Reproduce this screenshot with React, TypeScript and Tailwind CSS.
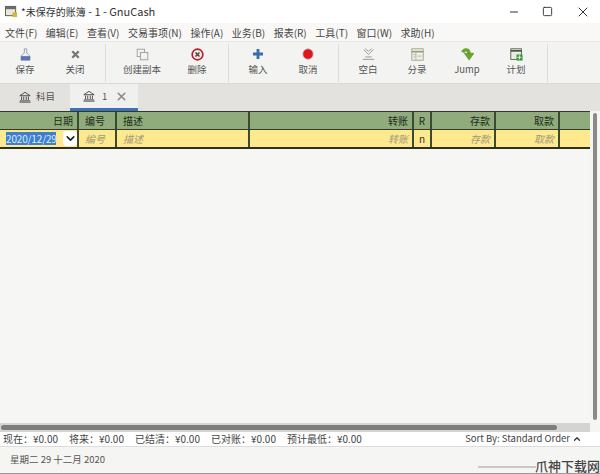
import { ReactNode } from 'react';
import { ChevronDown, ChevronUp, Minus, Square, X } from 'lucide-react';

const font = "font-['Noto_Sans_CJK_SC','Noto_Sans',sans-serif]";

const menus = ['文件(F)', '编辑(E)', '查看(V)', '交易事项(N)', '操作(A)', '业务(B)', '报表(R)', '工具(T)', '窗口(W)', '求助(H)'];

function SaveIcon() {
  return (
    <svg width="13" height="13" viewBox="0 0 16 16">
      <path d="M6.500 1h3v5l4 4v5h-11v-5l4-4z" fill="#eef0f4" stroke="#8791ad" />
      <rect x="2.500" y="10" width="11" height="5" fill="#5d74b2" />
    </svg>
  );
}

function CloseIcon() {
  return (
    <svg width="9" height="9" viewBox="0 0 14 14">
      <path d="M2 2l10 10M12 2L2 12" stroke="#75797c" strokeWidth="3.600" />
    </svg>
  );
}

function CopyIcon() {
  return (
    <svg width="13" height="13" viewBox="0 0 16 16" fill="#f2f2f0" stroke="#a2a29e" strokeWidth="1.200">
      <rect x="1.500" y="1.500" width="9" height="9" />
      <rect x="5.500" y="5.500" width="9" height="9" />
    </svg>
  );
}

function DeleteIcon() {
  return (
    <svg width="13" height="13" viewBox="0 0 16 16">
      <circle cx="8" cy="8" r="6.600" fill="#f4e6e6" stroke="#b3202c" strokeWidth="2" />
      <path d="M5.600 5.600l4.800 4.800M10.400 5.600l-4.800 4.800" stroke="#444" strokeWidth="1.800" />
    </svg>
  );
}

function PlusIcon() {
  return (
    <svg width="10" height="10" viewBox="0 0 14 14">
      <path d="M5 0h4v5h5v4H9v5H5V9H0V5h5z" fill="#3a6ea5" />
    </svg>
  );
}

function RecordIcon() {
  return (
    <svg width="12" height="12" viewBox="0 0 14 14">
      <circle cx="7" cy="7" r="6" fill="#e2141c" stroke="#b9a8a8" />
    </svg>
  );
}

function BlankIcon() {
  return (
    <svg width="13" height="13" viewBox="0 0 16 16" fill="none" stroke="#9a9c92" strokeWidth="1.200">
      <path d="M2 2l6 6 6-6M4 1l4 3 4-3" />
      <path d="M4 11h8M1 14h14" />
    </svg>
  );
}

function SplitIcon() {
  return (
    <svg width="13" height="13" viewBox="0 0 16 16">
      <rect x="1" y="1" width="14" height="14" fill="#f1f0e4" stroke="#8f9c80" />
      <path d="M1 4.500h14" stroke="#8f9c80" strokeWidth="2" />
      <path d="M6 5v10M3 8h2M3 11h2M8 10h5" stroke="#a5ad98" />
    </svg>
  );
}

function JumpIcon() {
  return (
    <svg width="13" height="14" viewBox="0 0 16 16">
      <path d="M2 6C4 1.500 10 1.500 10 8" fill="none" stroke="#68a62c" strokeWidth="4" />
      <path d="M4 7h12l-6 8.500z" fill="#68a62c" stroke="#4a7f1e" strokeWidth="0.600" />
    </svg>
  );
}

function ScheduleIcon() {
  return (
    <svg width="13" height="13" viewBox="0 0 16 16">
      <rect x="1" y="1" width="13" height="13" fill="#e6eee2" stroke="#44503f" />
      <path d="M1 3.500h13" stroke="#44503f" strokeWidth="2" />
      <rect x="8" y="8" width="7.500" height="7.500" fill="#3f9a44" />
      <path d="M11.700 9v5M9 11.500h5" stroke="#fff" />
    </svg>
  );
}

function BankIcon() {
  return (
    <svg width="12" height="12" viewBox="0 0 14 14" fill="none" stroke="#3e3e3e">
      <path d="M1 5.500L7 1.500l6 4z" />
      <path d="M3 6.500v4M5.500 6.500v4M8.500 6.500v4M11 6.500v4" />
      <path d="M1 11.500h12M0.500 13h13" />
    </svg>
  );
}

function ToolButton({ icon, label, width }: { icon: ReactNode; label: string; width: string }) {
  return (
    <div className={`flex ${width} shrink-0 flex-col items-center`}>
      <div className="flex h-[16px] items-center">{icon}</div>
      <span className="text-[9.500px] leading-[14px] text-[#555]">{label}</span>
    </div>
  );
}

function Group({ children, width }: { children: ReactNode; width: string }) {
  return (
    <div className={`flex h-[38px] ${width} shrink-0 items-center border-r border-[#dcdcd8] pb-[3px]`}>
      {children}
    </div>
  );
}

function Cell({ children, width, className = '' }: { children?: ReactNode; width: string; className?: string }) {
  return (
    <div className={`flex ${width} shrink-0 items-center border-r-2 px-1 text-[10px] ${className}`}>
      {children}
    </div>
  );
}

export default function App() {
  const hint = 'justify-end italic text-[#a09a78] border-[#3c4a32]';
  const head = 'text-[#1d2a18] border-[#3c4a32]';
  const totals = [
    ['现在：', '¥0.00'],
    ['将来：', '¥0.00'],
    ['已结清：', '¥0.00'],
    ['已对账：', '¥0.00'],
    ['预计最低：', '¥0.00'],
  ];

  return (
    <div className={`${font} flex h-[474px] w-[600px] flex-col overflow-hidden bg-[#f5f5f3]`}>
      {/* title bar */}
      <div className="flex h-[23px] items-center bg-white pl-[5px]">
        <svg width="13" height="13" viewBox="0 0 14 14">
          <rect x="0.500" y="1.500" width="11" height="10" fill="#ece8dc" stroke="#555" />
          <rect x="0.500" y="1.500" width="11" height="3" fill="#6b6b62" />
          <rect x="8" y="8" width="5" height="5" fill="#d7b43a" />
        </svg>
        <span className="ml-[3px] text-[10px] text-[#333]">
          *未保存的账簿<span className="text-[11px]"> - 1 - GnuCash</span>
        </span>
        <div className="ml-auto mr-[9px] flex items-center gap-[22px] text-[#333]">
          <Minus size={12} />
          <Square size={11} />
          <X size={16} strokeWidth={1.500} />
        </div>
      </div>

      {/* menu */}
      <div className="flex h-[18px] items-center gap-[8.500px] bg-[#f9f8f7] pl-[5px] text-[10px] text-[#444]">
        {menus.map((m) => (
          <span key={m}>{m}</span>
        ))}
      </div>

      {/* toolbar */}
      <div className="flex h-[42px] items-center border-t border-[#e6e6e3] bg-[#f3f3f1]">
        <Group width="w-[106px]">
          <ToolButton icon={<SaveIcon />} label="保存" width="w-[50px]" />
          <ToolButton icon={<CloseIcon />} label="关闭" width="w-[50px]" />
        </Group>
        <Group width="w-[123px]">
          <ToolButton icon={<CopyIcon />} label="创建副本" width="w-[72px]" />
          <ToolButton icon={<DeleteIcon />} label="删除" width="w-[38px]" />
        </Group>
        <Group width="w-[110px]">
          <ToolButton icon={<PlusIcon />} label="输入" width="w-[58px]" />
          <ToolButton icon={<RecordIcon />} label="取消" width="w-[42px]" />
        </Group>
        <Group width="w-[209px]">
          <ToolButton icon={<BlankIcon />} label="空白" width="w-[58px]" />
          <ToolButton icon={<SplitIcon />} label="分录" width="w-[40px]" />
          <ToolButton icon={<JumpIcon />} label="Jump" width="w-[60px]" />
          <ToolButton icon={<ScheduleIcon />} label="计划" width="w-[38px]" />
        </Group>
      </div>

      {/* tabs */}
      <div className="flex h-[28px] items-stretch border-t border-[#d8d8d5] bg-[#e4e2de]">
        <div className="flex w-[70px] items-center pb-[2px] pl-[19px] text-[9.500px] text-[#555]">
          <BankIcon />
          <span className="ml-[5px]">科目</span>
        </div>
        <div className="flex w-[68px] items-center border-b-[3px] border-[#3f72b5] bg-[#f0f0ee] pl-[13px] text-[9.500px] text-[#555]">
          <BankIcon />
          <span className="ml-[7px]">1</span>
          <X size={13} strokeWidth={3} className="ml-[8px] text-[#8a8a8a]" />
        </div>
      </div>

      {/* register */}
      <div className="flex min-h-0 flex-1">
        <div className="flex w-[590px] shrink-0 flex-col">
          <div className="flex h-[19px] border-y border-[#2f3a28] bg-[#90ac7c]">
            <Cell width="w-[79px]" className={`justify-end ${head}`}>日期</Cell>
            <Cell width="w-[38px]" className={`pl-[6px] ${head}`}>编号</Cell>
            <Cell width="w-[133px]" className={`pl-[6px] ${head}`}>描述</Cell>
            <Cell width="w-[164px]" className={`justify-end ${head}`}>转账</Cell>
            <Cell width="w-[18px]" className={`justify-center ${head}`}>R</Cell>
            <Cell width="w-[64px]" className={`justify-end ${head}`}>存款</Cell>
            <Cell width="w-[64px]" className={`justify-end ${head}`}>取款</Cell>
            <div className="flex-1" />
          </div>
          <div className="flex h-[19px] border-b-2 border-[#2f2f22] bg-[#ffe98f]">
            <div className="flex w-[79px] shrink-0 items-center border-r-2 border-[#3c4a32] pl-[6px]">
              <span className="w-[50px] whitespace-nowrap bg-[#3f7fd0] text-[10px] leading-[13px] tracking-[-0.150px] text-[#dfeafa]">2020/12/29</span>
              <span className="ml-[7px] flex h-[15px] w-[14px] items-center justify-center rounded-sm bg-white">
                <ChevronDown size={13} strokeWidth={3} className="text-[#222]" />
              </span>
            </div>
            <Cell width="w-[38px]" className="pl-[6px] italic text-[#a09a78] border-[#3c4a32]">编号</Cell>
            <Cell width="w-[133px]" className="pl-[6px] italic text-[#a09a78] border-[#3c4a32]">描述</Cell>
            <Cell width="w-[164px]" className={hint}>转账</Cell>
            <Cell width="w-[18px]" className="justify-center text-[#333] border-[#3c4a32]">n</Cell>
            <Cell width="w-[64px]" className={hint}>存款</Cell>
            <Cell width="w-[64px]" className={hint}>取款</Cell>
            <div className="flex-1" />
          </div>
          <div className="flex-1 bg-[#f6f6f4]" />
          {/* horizontal scrollbar */}
          <div className="flex h-[9px] shrink-0 items-center bg-[#d4d4d2] px-[1px]">
            <div className="h-[5px] w-[556px] rounded-full bg-[#7d7d7d]" />
          </div>
        </div>
        {/* vertical scrollbar */}
        <div className="w-[10px] shrink-0 bg-[#f5f5f3] pl-[3px] pt-[2px]">
          <div className="h-[307px] w-[4px] rounded-full bg-[#8a8a8a]" />
        </div>
      </div>

      {/* summary bar */}
      <div className="flex h-[15px] shrink-0 items-center justify-between border-b border-[#dcdcda] bg-white pb-[1px] pl-[3px] pr-[18px] text-[10px] text-[#444]">
        <div className="flex gap-[11px]">
          {totals.map(([label, value]) => (
            <span key={label}>{label}{value}</span>
          ))}
        </div>
        <div className="flex items-center gap-[2px]">
          <span className="text-[9.500px]">Sort By: Standard Order</span>
          <ChevronUp size={10} strokeWidth={3} className="text-[#333]" />
        </div>
      </div>

      {/* status bar */}
      <div className="relative flex h-[27px] shrink-0 items-center border-b border-[#9a9a9a] bg-[#f5f5f3] pb-[2px] pl-[10px] text-[9.500px] text-[#555]">
        <span>星期二 29 十二月 2020</span>
        <div className="absolute right-[64px] bottom-[5px] h-[2px] w-[58px] bg-[#c8c8c6]" />
        <span className="absolute right-0 bottom-[-1px] text-[13px] leading-[16px] font-medium text-[#444]">爪神下载网</span>
      </div>
    </div>
  );
}
